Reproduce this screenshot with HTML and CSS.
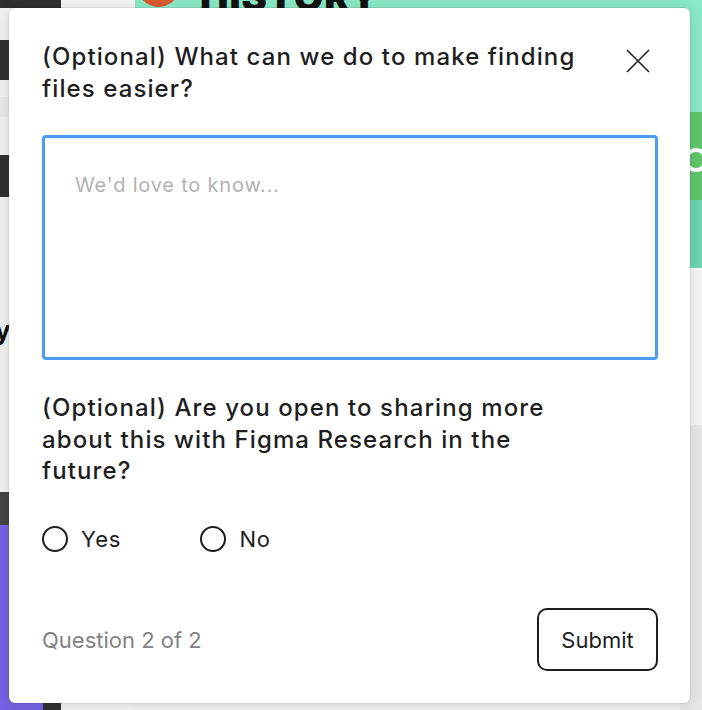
FILE: index.html
```html
<!DOCTYPE html>
<html lang="en">
<head>
<meta charset="utf-8">
<title>Feedback</title>
<link rel="stylesheet" href="styles.css">
</head>
<body>
<div class="backdrop" aria-hidden="true">
  <div class="bg bg-top-dark"></div>
  <div class="bg bg-top-light"></div>
  <div class="bg bg-top-green"></div>
  <div class="bg bg-logo"></div>
  <div class="bg bg-history">HISTORY</div>
  <div class="bg bg-left-1"></div>
  <div class="bg bg-left-2"></div>
  <div class="bg bg-left-3"></div>
  <div class="bg bg-left-y">y</div>
  <div class="bg bg-left-4"></div>
  <div class="bg bg-left-purple"></div>
  <div class="bg bg-right-green"></div>
  <div class="bg bg-right-dot"></div>
  <div class="bg bg-right-teal"></div>
  <div class="bg bg-right-light"></div>
  <div class="bg bg-right-gray"></div>
  <div class="bg bg-bottom-dark"></div>
  <div class="bg bg-bottom-light"></div>
</div>

<div class="modal" role="dialog">
  <div class="header">
    <h2 class="title">(Optional) What can we do to make finding files easier?</h2>
    <button class="close" aria-label="Close">
      <svg width="24" height="24" viewBox="0 0 24 24"><path d="M1 1 L23 23 M23 1 L1 23" stroke="#222" stroke-width="1.6" fill="none"/></svg>
    </button>
  </div>
  <textarea class="answer" placeholder="We'd love to know..."></textarea>
  <h2 class="question">(Optional) Are you open to sharing more about this with Figma Research in the future?</h2>
  <div class="options">
    <label class="option"><span class="radio"></span><span class="opt-label">Yes</span></label>
    <label class="option"><span class="radio"></span><span class="opt-label">No</span></label>
  </div>
  <div class="footer">
    <span class="progress">Question 2 of 2</span>
    <button class="submit">Submit</button>
  </div>
</div>
</body>
</html>
```
FILE: styles.css
```css
* { box-sizing: border-box; }
html, body { margin: 0; padding: 0; }
body {
  width: 702px;
  height: 710px;
  overflow: hidden;
  position: relative;
  background: #f0f0f0;
  font-family: "Inter", "Noto Sans", sans-serif;
}
.backdrop { position: absolute; inset: 0; }
.bg { position: absolute; }
.bg-top-dark { left: 0; top: 0; width: 61px; height: 8px; background: #2e2e2e; }
.bg-top-light { left: 61px; top: 0; width: 74px; height: 8px; background: #f3f3f3; }
.bg-top-green { left: 135px; top: 0; width: 567px; height: 112px; background: #8ae8c6; }
.bg-logo { left: 137px; top: -36px; width: 43px; height: 43px; border-radius: 50%; background: #d85a30; }
.bg-history { left: 200px; top: -22px; font-size: 38px; font-weight: 900; color: #111; letter-spacing: 1px; line-height: 1; }
.bg-left-1 { left: 0; top: 40px; width: 9px; height: 40px; background: #2e2e2e; }
.bg-left-2 { left: 0; top: 155px; width: 9px; height: 42px; background: #2e2e2e; }
.bg-left-3 { left: 0; top: 97px; width: 9px; height: 20px; background: #e8e8e8; }
.bg-left-y { left: -5px; top: 318px; font-size: 26px; font-weight: 700; color: #111; line-height: 1; }
.bg-left-4 { left: 0; top: 492px; width: 9px; height: 33px; background: #444; }
.bg-left-purple { left: 0; top: 525px; width: 43px; height: 185px; background: #7462e4; }
.bg-right-green { left: 680px; top: 112px; width: 22px; height: 156px; background: #5fc46a; }
.bg-right-dot { left: 688px; top: 152px; width: 16px; height: 16px; border-radius: 50%; background: #5fc46a; box-shadow: 0 0 0 4px #fff; }
.bg-right-teal { left: 680px; top: 200px; width: 22px; height: 68px; background: #6dd5b0; }
.bg-right-light { left: 680px; top: 268px; width: 22px; height: 157px; background: #f4f4f4; border-top: 1px solid #fff; }
.bg-right-gray { left: 680px; top: 425px; width: 22px; height: 285px; background: #e6e6e6; }
.bg-bottom-dark { left: 43px; top: 690px; width: 18px; height: 20px; background: #333; }
.bg-bottom-light { left: 61px; top: 690px; width: 74px; height: 20px; background: #f2f2f2; }

.modal {
  position: absolute;
  left: 9px;
  top: 8px;
  width: 681px;
  height: 695px;
  background: #fff;
  border-radius: 6px;
  box-shadow: 0 0 0 0.5px rgba(0,0,0,0.12), 0 2px 14px rgba(0,0,0,0.12);
  padding: 33px 32px 32px 33px;
  display: flex;
  flex-direction: column;
  color: #1e1e1e;
}
.header {
  display: flex;
  align-items: flex-start;
  justify-content: space-between;
  gap: 40px;
}
.title, .question {
  margin: 0;
  font-size: 24px;
  line-height: 31.5px;
  font-weight: 500;
  letter-spacing: 1.1px;
}
.title { flex: 1; }
.question { max-width: 540px; }
.close {
  border: 0;
  background: none;
  padding: 0;
  margin-top: 8px;
  margin-right: 8px;
  width: 24px;
  height: 24px;
  display: block;
}
.close svg { display: block; }
.answer {
  margin-top: 31px;
  height: 225px;
  width: 100%;
  border: 3px solid #4b9cf5;
  border-radius: 4px;
  padding: 35px 30px;
  font-family: inherit;
  font-size: 20px;
  line-height: 24px;
  letter-spacing: 0.8px;
  resize: none;
  outline: none;
  color: #1e1e1e;
}
.answer::placeholder { color: #b2b2b2; }
.question { margin-top: 32px; }
.options {
  margin-top: 39px;
  display: flex;
  gap: 79px;
}
.option {
  display: flex;
  align-items: center;
  gap: 13px;
}
.radio {
  width: 26px;
  height: 26px;
  border: 2px solid #1e1e1e;
  border-radius: 50%;
  display: block;
}
.opt-label { font-size: 22px; line-height: 26px; letter-spacing: 0.9px; }
.footer {
  margin-top: auto;
  display: flex;
  align-items: center;
  justify-content: space-between;
}
.progress { font-size: 22px; color: #838383; }
.submit {
  width: 121px;
  height: 63px;
  border: 2px solid #1e1e1e;
  border-radius: 10px;
  background: #fff;
  font-family: inherit;
  font-size: 22px;
  color: #1e1e1e;
  padding: 0;
}
```
